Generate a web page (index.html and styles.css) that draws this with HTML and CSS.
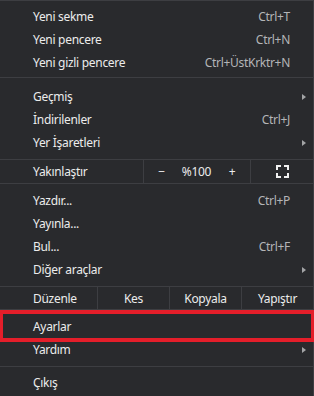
FILE: index.html
```html
<!DOCTYPE html>
<html lang="tr">
<head>
<meta charset="utf-8">
<title>Menü</title>
<link rel="stylesheet" href="styles.css">
</head>
<body>
<div class="menu">
  <div class="item"><span class="label">Yeni sekme</span><span class="key">Ctrl+T</span><span class="sub"></span></div>
  <div class="item"><span class="label">Yeni pencere</span><span class="key">Ctrl+N</span><span class="sub"></span></div>
  <div class="item"><span class="label">Yeni gizli pencere</span><span class="key">Ctrl+ÜstKrktr+N</span><span class="sub"></span></div>
  <div class="sep sep-first"></div>
  <div class="item"><span class="label">Geçmiş</span><span class="key"></span><span class="sub"><i class="arrow"></i></span></div>
  <div class="item"><span class="label">İndirilenler</span><span class="key">Ctrl+J</span><span class="sub"></span></div>
  <div class="item"><span class="label">Yer İşaretleri</span><span class="key"></span><span class="sub"><i class="arrow"></i></span></div>
  <div class="zoom-row">
    <span class="cell-label">Yakınlaştır</span>
    <span class="zbtn first">−</span>
    <span class="zbtn">%100</span>
    <span class="zbtn">+</span>
    <span class="zfull">
      <svg width="13" height="13" viewBox="0 0 13 13" aria-hidden="true">
        <path d="M1 5V1H5M8 1H12V5M12 8V12H8M5 12H1V8" fill="none" stroke="#f1f1f1" stroke-width="2" stroke-linecap="butt" stroke-linejoin="miter"/>
      </svg>
    </span>
  </div>
  <div class="item after-row"><span class="label">Yazdır...</span><span class="key">Ctrl+P</span><span class="sub"></span></div>
  <div class="item"><span class="label">Yayınla...</span><span class="key"></span><span class="sub"></span></div>
  <div class="item"><span class="label">Bul...</span><span class="key">Ctrl+F</span><span class="sub"></span></div>
  <div class="item"><span class="label">Diğer araçlar</span><span class="key"></span><span class="sub"><i class="arrow"></i></span></div>
  <div class="edit-row">
    <span class="cell-label">Düzenle</span>
    <span class="ebtn">Kes</span>
    <span class="ebtn">Kopyala</span>
    <span class="ebtn">Yapıştır</span>
  </div>
  <div class="item after-row highlight"><span class="label">Ayarlar</span><span class="key"></span><span class="sub"></span></div>
  <div class="item"><span class="label">Yardım</span><span class="key"></span><span class="sub"><i class="arrow"></i></span></div>
  <div class="sep sep-last"></div>
  <div class="item"><span class="label">Çıkış</span><span class="key"></span><span class="sub"></span></div>
</div>
</body>
</html>
```
FILE: styles.css
```css
html, body {
  margin: 0;
  padding: 0;
  background: #292a2d;
}
body {
  width: 314px;
  height: 396px;
  overflow: hidden;
  font-family: "Noto Sans", "Open Sans", sans-serif;
  font-size: 12px;
  letter-spacing: -0.3px;
  color: #ececec;
}
.menu {
  box-sizing: border-box;
  width: 314px;
  height: 396px;
  border-top: 1px solid #3d3e42;
  border-right: 1px solid #3d3e42;
  padding-top: 4px;
}
.item {
  position: relative;
  height: 23px;
  display: flex;
  align-items: center;
  padding-left: 33px;
}
.label {
  flex: 1;
  white-space: nowrap;
}
.key {
  color: #b4b5b7;
  white-space: nowrap;
}
.sub {
  width: 23px;
  display: flex;
  align-items: center;
  justify-content: flex-end;
  padding-right: 7px;
  box-sizing: border-box;
}
.arrow {
  display: block;
  width: 0;
  height: 0;
  border-top: 3.5px solid transparent;
  border-bottom: 3.5px solid transparent;
  border-left: 4px solid #a3a4a6;
}
.sep {
  height: 1px;
  background: #3d3e42;
}
.sep-first {
  margin: 3px 0 7px;
}
.sep-last {
  margin: 5px 0 4px;
}
.zoom-row {
  margin-top: 5px;
  height: 23px;
  border-top: 1px solid #3d3e42;
  border-bottom: 1px solid #3d3e42;
  display: grid;
  grid-template-columns: 143px 36px 35px 36px 1fr;
  align-items: stretch;
}
.edit-row {
  margin-top: 5px;
  height: 22px;
  border-top: 1px solid #3d3e42;
  border-bottom: 1px solid #3d3e42;
  display: grid;
  grid-template-columns: 97px 72px 72px 1fr;
  align-items: stretch;
}
.cell-label {
  display: flex;
  align-items: center;
  padding-left: 33px;
}
.zbtn, .ebtn, .zfull {
  display: flex;
  align-items: center;
  justify-content: center;
}
.zbtn.first, .zfull, .ebtn {
  border-left: 1px solid #3d3e42;
}
.after-row {
  margin-top: 5px;
}
.highlight::after {
  content: "";
  position: absolute;
  left: 0;
  right: -1px;
  top: -5px;
  bottom: -4px;
  border: 4px solid #e41e2a;
  border-left-width: 3px;
  border-right-width: 3px;
}
```
